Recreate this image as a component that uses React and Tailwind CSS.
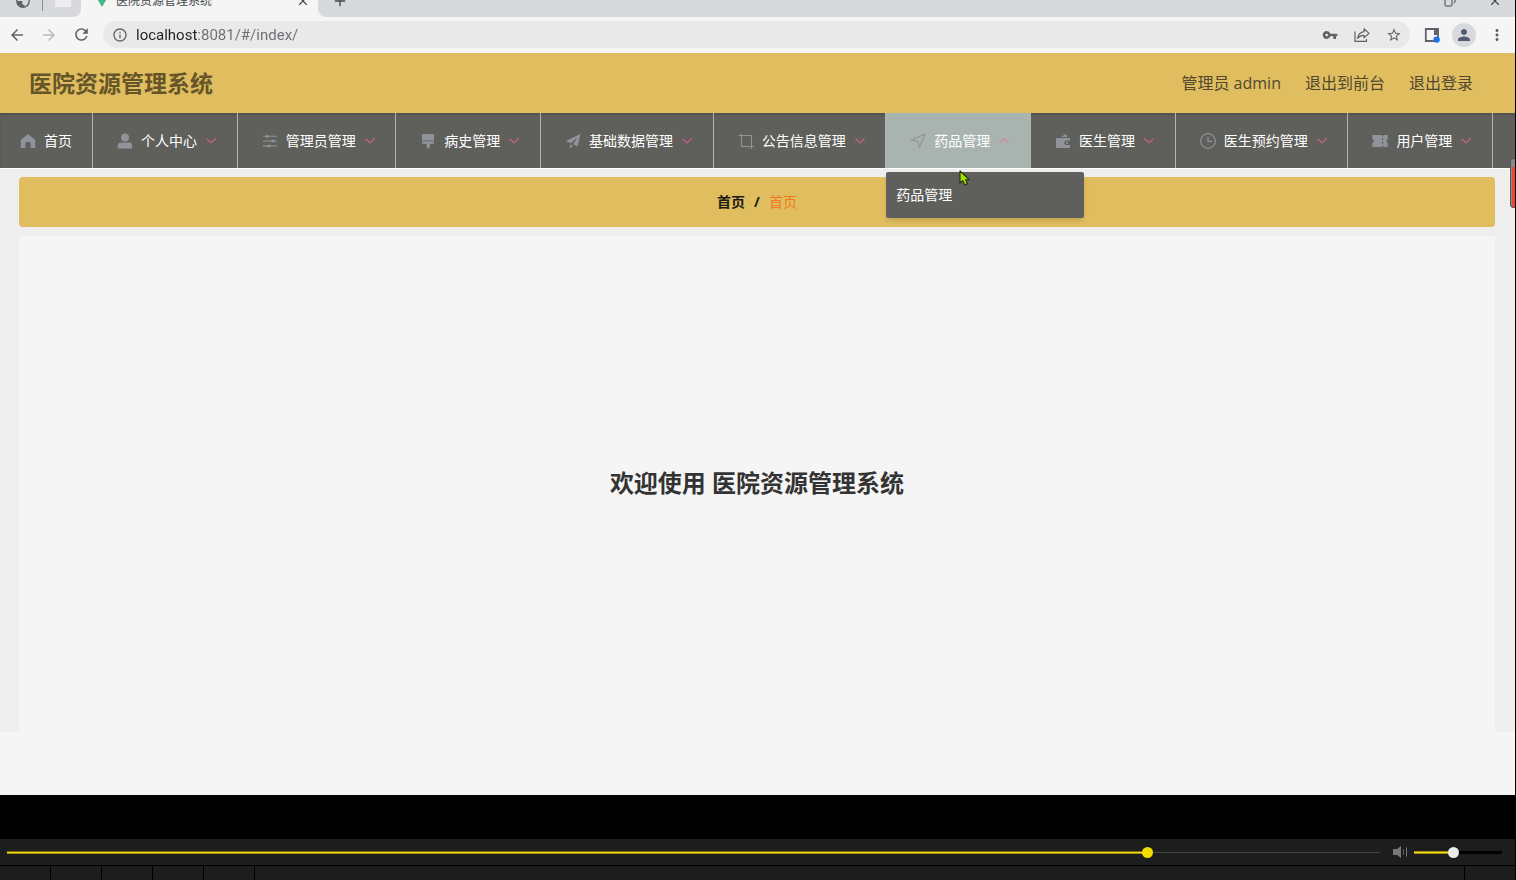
import React, { useState } from 'react';
import {
  MdArrowBack,
  MdArrowForward,
  MdRefresh,
  MdInfoOutline,
  MdVpnKey,
  MdStarBorder,
  MdMoreVert,
  MdPerson,
} from 'react-icons/md';
import { X, Plus, Copy } from 'lucide-react';

const HomeIcon = () => (
  <path d="M8 1 L15.3 7 V15 H10.6 V10.2 Q10.6 9 9.4 9 H6.6 Q5.4 9 5.4 10.2 V15 H0.7 V7 Z" fill="currentColor" />
);

const UserIcon = () => (
  <g fill="currentColor">
    <circle cx="8" cy="4.6" r="4" />
    <path d="M0.8 15.4 V13 Q0.8 9.6 4.2 9.6 H11.8 Q15.2 9.6 15.2 13 V15.4 Z" />
  </g>
);

const OperationIcon = () => (
  <g>
    <path d="M1 3.2 H15 M1 8 H15 M1 12.9 H15" stroke="currentColor" strokeWidth="1.1" />
    <circle cx="5.2" cy="3.2" r="1.5" fill="currentColor" />
    <circle cx="10.9" cy="8" r="1.5" fill="currentColor" />
    <circle cx="6.8" cy="12.9" r="1.5" fill="currentColor" />
  </g>
);

const BrushIcon = () => (
  <path d="M2.6 1 H13.4 Q14 1 14 1.6 V7.6 H2 V1.6 Q2 1 2.6 1 Z M2 8.2 H14 V9.4 Q14 11 12.4 11 H9.8 V14 Q9.8 15.6 8 15.6 Q6.8 15.6 6.8 14 V11 H3.6 Q2 11 2 9.4 Z" fill="currentColor" />
);

const PromotionIcon = () => (
  <path d="M0.8 8 L15.4 1 L12.6 13.6 L8 11.2 L12.4 4.6 L5.8 10.2 Z M5 11.2 L8 12.8 L5.2 15.4 Z" fill="currentColor" />
);

const CropIcon = () => (
  <path d="M0.5 2.5 H13.5 V16 M3.5 0.5 V13.5 H16" fill="none" stroke="currentColor" strokeWidth="1.1" />
);

const PositionIcon = () => (
  <path d="M1 6.9 L15 1.2 L9.4 15 L8 8.6 Z" fill="none" stroke="currentColor" strokeWidth="1.1" strokeLinejoin="round" />
);

const WalletIcon = () => (
  <g fill="currentColor">
    <path d="M6 4 L10.6 1 L12.6 4 Z" />
    <path d="M1.6 5 H14.4 Q15 5 15 5.6 V7.4 H11.6 Q9.2 7.4 9.2 9.7 Q9.2 12 11.6 12 H15 V14.4 Q15 15 14.4 15 H1.6 Q1 15 1 14.4 V5.6 Q1 5 1.6 5 Z" />
    <circle cx="12" cy="9.7" r="1.1" />
  </g>
);

const ClockIcon = () => (
  <g fill="none" stroke="currentColor" strokeWidth="1.1">
    <circle cx="8" cy="8" r="7.4" />
    <path d="M8 3.4 V8.4 H12" />
  </g>
);

const TicketIcon = () => (
  <path d="M0.2 2 H10 V3.4 H11.2 V2 H15.8 V5.6 Q13.4 8 15.8 10.6 V14 H11.2 V12.6 H10 V14 H0.2 V10.6 Q3.4 8 0.2 5.6 Z M10 5.4 V7.2 H11.2 V5.4 Z M10 9 V10.8 H11.2 V9 Z" fill="currentColor" fillRule="evenodd" />
);

const menus = [
  { label: '个人中心', icon: UserIcon },
  { label: '管理员管理', icon: OperationIcon },
  { label: '病史管理', icon: BrushIcon },
  { label: '基础数据管理', icon: PromotionIcon },
  { label: '公告信息管理', icon: CropIcon },
  { label: '药品管理', icon: PositionIcon, children: ['药品管理'] },
  { label: '医生管理', icon: WalletIcon },
  { label: '医生预约管理', icon: ClockIcon },
  { label: '用户管理', icon: TicketIcon },
];

const MenuIcon = ({ icon: Icon }) => (
  <span className="flex w-6 justify-center mr-1 text-[#909399]">
    <svg viewBox="0 0 16 16" className="w-4 h-4" aria-hidden="true">
      <Icon />
    </svg>
  </span>
);

const Arrow = ({ open }) => (
  <svg
    viewBox="0 0 12 12"
    className={`ml-2 w-3 h-3 ${open ? 'text-[#cf8b98]' : 'text-[#cf5f82]'}`}
    fill="none"
    stroke="currentColor"
    strokeWidth="1.2"
    aria-hidden="true"
  >
    <path d={open ? 'M1.5 8 L6 3.5 L10.5 8' : 'M1.5 3.5 L6 8 L10.5 3.5'} />
  </svg>
);

const TabStrip = () => (
  <div className="flex h-[17px] flex-col justify-end overflow-hidden bg-[#f5f5f5] text-[#45474a]">
    <div className="flex h-8 shrink-0">
      <div className="flex w-[81px] items-center rounded-br-lg bg-[#d8d9dd] pl-4">
        <svg viewBox="0 0 14 14" className="w-[14px] h-[14px]" aria-hidden="true">
          <circle cx="7" cy="7" r="6.2" fill="#d8d9dd" stroke="#5d6064" strokeWidth="1.4" />
          <path d="M1 7 H6 Q7 8 6 9.4 Q7 11 9 11.4 L8 13 Q1.6 13 1 7 Z" fill="#5d6064" />
        </svg>
        <span className="ml-3 h-5 w-px bg-[#8b8d90]" />
        <span className="ml-3 h-3 w-4 bg-[#eeeeee]" />
      </div>
      <div className="flex w-[237px] items-center pl-[14px] pr-2">
        <svg viewBox="0 0 14 12" className="w-[14px] h-3" aria-hidden="true">
          <path d="M0 0 L7 12 L14 0 H11 L7 7 L3 0 Z" fill="#41b883" />
          <path d="M3 0 L7 7 L11 0 Z" fill="#35a878" />
        </svg>
        <span className="ml-[7px] text-xs">医院资源管理系统</span>
        <button type="button" aria-label="关闭标签页" className="ml-auto">
          <X className="w-[14px] h-[14px]" />
        </button>
      </div>
      <div className="flex flex-1 items-center rounded-bl-lg bg-[#d8d9dd] pl-[14px] pr-[13px]">
        <button type="button" aria-label="新建标签页">
          <Plus className="w-4 h-4" />
        </button>
        <div className="ml-auto flex items-center gap-8">
          <button type="button" aria-label="还原">
            <Copy className="w-3 h-3 -scale-x-100" />
          </button>
          <button type="button" aria-label="关闭">
            <X className="w-[14px] h-[14px]" />
          </button>
        </div>
      </div>
    </div>
  </div>
);

const Toolbar = () => {
  const [url, setUrl] = useState('localhost:8081/#/index/');

  return (
    <div className="flex h-9 items-center bg-[#f5f5f5] pb-px pl-2 pr-[9px] text-[#5f6368]">
      <button type="button" aria-label="后退" className="w-8">
        <MdArrowBack className="w-[18px] h-[18px]" />
      </button>
      <button type="button" aria-label="前进" className="w-8 text-[#b9bbbd]">
        <MdArrowForward className="w-[18px] h-[18px]" />
      </button>
      <button type="button" aria-label="刷新" className="w-[31px]">
        <MdRefresh className="w-[19px] h-[19px]" />
      </button>
      <div className="flex h-[27px] flex-1 items-center rounded-full bg-[#e9e9e9] pl-2 pr-2">
        <MdInfoOutline className="w-4 h-4 ml-px" />
        <input
          type="text"
          aria-label="地址"
          value={url}
          onChange={(e) => setUrl(e.target.value)}
          className="ml-2 flex-1 bg-[linear-gradient(to_right,#202124_62px,#6a6d71_62px)] bg-clip-text font-['Roboto',sans-serif] text-[15px] leading-5 text-transparent outline-none"
        />
        <div className="flex items-center gap-4">
          <button type="button" aria-label="密码">
            <MdVpnKey className="w-4 h-4" />
          </button>
          <button type="button" aria-label="分享">
            <svg viewBox="0 0 16 16" className="w-4 h-4" fill="none" stroke="currentColor" strokeWidth="1.2" aria-hidden="true">
              <path d="M1 4.5 V14.4 H12.5 V12" />
              <path d="M10 1.8 L15 6.4 L10 10.8 V8.3 Q6 8 3.6 11.4 Q4.4 5.4 10 4.6 Z" strokeLinejoin="round" />
            </svg>
          </button>
          <button type="button" aria-label="收藏">
            <MdStarBorder className="w-4 h-4" />
          </button>
        </div>
      </div>
      <div className="ml-[14px] flex items-center">
        <button type="button" aria-label="侧边栏">
          <svg viewBox="0 0 16 16" className="w-4 h-4" aria-hidden="true">
            <path d="M1.8 2 H14 V14 H1.8 Z" fill="none" stroke="#5f6368" strokeWidth="1.8" />
            <path d="M10 1.5 H14.8 V8 H10 Z" fill="#5f6368" />
            <circle cx="12.6" cy="12.6" r="3.2" fill="#1a73e8" />
          </svg>
        </button>
        <button type="button" aria-label="用户" className="ml-3 flex h-6 w-6 items-center justify-center rounded-full bg-[#d9dadf] text-[#525c6e]">
          <MdPerson className="w-[18px] h-[18px]" />
        </button>
        <button type="button" aria-label="更多" className="ml-3">
          <MdMoreVert className="w-[18px] h-[18px]" />
        </button>
      </div>
    </div>
  );
};

const Header = () => (
  <header className="flex h-[60px] items-center justify-between bg-[#e0be60] pl-[29px] pr-[42px] text-[#665528]">
    <h1 className="text-[23px] font-bold">医院资源管理系统</h1>
    <div className="flex gap-6 text-base text-[#51482f]">
      <span>管理员 admin</span>
      <a href="#front">退出到前台</a>
      <a href="#login">退出登录</a>
    </div>
  </header>
);

const NavMenu = () => (
  <nav className="bg-[#5f5f5c] pr-[22px] text-sm text-white shadow-[inset_0_2px_2px_rgba(0,0,0,0.15)]">
    <ul className="flex h-[55px]">
      <li className="border-r border-[#b4b4b2]">
        <a href="#index" className="flex h-full items-center pl-4 pr-5 whitespace-nowrap">
          <MenuIcon icon={HomeIcon} />
          首页
        </a>
      </li>
      {menus.map((menu) => {
        const open = Boolean(menu.children);
        return (
          <li
            key={menu.label}
            className={`relative grow border-r border-[#b4b4b2] ${open ? 'bg-[#a9b4b0]' : ''}`}
          >
            <button
              type="button"
              aria-expanded={open}
              className="flex h-full w-full items-center pl-5 pr-[19px] whitespace-nowrap"
            >
              <MenuIcon icon={menu.icon} />
              {menu.label}
              <Arrow open={open} />
            </button>
            {open && (
              <ul className="absolute left-0 top-full z-10 mt-1 w-[198px] rounded-xs bg-[#5f5f5c] shadow-md">
                {menu.children.map((child) => (
                  <li key={child}>
                    <a href="#medicine" className="flex h-[46px] items-center px-[10px]">
                      {child}
                    </a>
                  </li>
                ))}
              </ul>
            )}
          </li>
        );
      })}
    </ul>
  </nav>
);

const Player = () => {
  const [progress, setProgress] = useState(83.3);
  const [volume, setVolume] = useState(44.5);

  return (
    <footer className="bg-[#1d1d1d]">
      <div className="flex h-[27px] items-center border-b border-black pl-[7px] pr-[13px]">
        <input
          type="range"
          aria-label="播放进度"
          min="0"
          max="100"
          step="0.1"
          value={progress}
          onChange={(e) => setProgress(Number(e.target.value))}
          style={{ backgroundSize: `${progress}% 3px, 100% 1px` }}
          className="h-[3px] min-w-0 flex-1 appearance-none bg-[linear-gradient(#7d6c0c_33%,#f5dc14_33%,#f5dc14_66%,#a38e10_66%),linear-gradient(#444444,#444444)] bg-[position:left_center] bg-no-repeat [&::-webkit-slider-thumb]:h-[11px] [&::-webkit-slider-thumb]:w-[11px] [&::-webkit-slider-thumb]:appearance-none [&::-webkit-slider-thumb]:rounded-full [&::-webkit-slider-thumb]:bg-[#f5dc00]"
        />
        <button type="button" aria-label="静音" className="ml-3 text-[#777777]">
          <svg viewBox="0 0 16 14" className="w-4 h-[14px]" aria-hidden="true">
            <path d="M1 4 H5 L9 1 V13 L5 10 H1 Z" fill="currentColor" />
            <path d="M11.5 4 V10" stroke="#5a5a5a" />
            <path d="M14.5 2.5 V11.5" stroke="currentColor" />
          </svg>
        </button>
        <input
          type="range"
          aria-label="音量"
          min="0"
          max="100"
          step="0.5"
          value={volume}
          onChange={(e) => setVolume(Number(e.target.value))}
          style={{ backgroundSize: `${volume}% 3px, 100% 3px` }}
          className="ml-[6px] h-[3px] w-[88px] appearance-none bg-[linear-gradient(#a38e10_33%,#f5dc14_33%,#f5dc14_66%,#a38e10_66%),linear-gradient(#000000,#000000)] bg-[position:left_center] bg-no-repeat [&::-webkit-slider-thumb]:h-[11px] [&::-webkit-slider-thumb]:w-[11px] [&::-webkit-slider-thumb]:appearance-none [&::-webkit-slider-thumb]:rounded-full [&::-webkit-slider-thumb]:bg-[#ebebeb]"
        />
      </div>
      <div className="flex h-[14px]">
        {[1, 2, 3, 4, 5].map((cell) => (
          <div key={cell} className="w-[51px] border-r border-black" />
        ))}
        <div className="flex-1 border-r border-black" />
        <div className="w-[50px]" />
      </div>
    </footer>
  );
};

export default function App() {
  return (
    <div className="relative flex min-h-screen flex-col border-r border-black bg-black font-['Open_Sans','Noto_Sans_CJK_SC',sans-serif]">
      <TabStrip />
      <Toolbar />
      <Header />
      <NavMenu />

      <main className="flex flex-1 flex-col border-t border-white bg-[#eeeeee] pl-[19px] pr-5 pt-[8px]">
        <div className="flex h-[50px] items-center justify-center gap-[9px] rounded bg-[#e0be60] text-sm">
          <span className="font-bold text-[#1c1a12]">首页</span>
          <span className="font-bold text-[#1c1a12]">/</span>
          <a href="#index" className="text-[#f0781e]">首页</a>
        </div>
        <section className="mt-[9px] flex flex-1 items-center justify-center bg-[#f5f5f5] pb-[2px]">
          <h2 className="text-2xl font-bold text-[#333333]">欢迎使用 医院资源管理系统</h2>
        </section>
      </main>
      <div className="h-[63px] bg-[#f5f5f5]" />
      <div className="h-11 bg-black" />
      <Player />

      {/* recorder handle on the screen edge */}
      <div className="absolute right-0 top-[158px] z-20 h-[50px] w-[5px] overflow-hidden rounded-l border border-r-0 border-[#555555] bg-[#8a8a8a] pt-2">
        <div className="ml-px h-full bg-[#f4452c]" />
      </div>

      {/* mouse pointer */}
      <svg viewBox="0 0 12 16" className="absolute left-[959px] top-[170px] z-20 h-4 w-3" aria-hidden="true">
        <path d="M1 1 V13 L3.8 10.6 L5.8 15 L8.4 13.8 L6.6 9.8 H10.4 Z" fill="#a6e00a" stroke="#24300a" strokeWidth="1.1" strokeLinejoin="round" />
      </svg>
    </div>
  );
}
